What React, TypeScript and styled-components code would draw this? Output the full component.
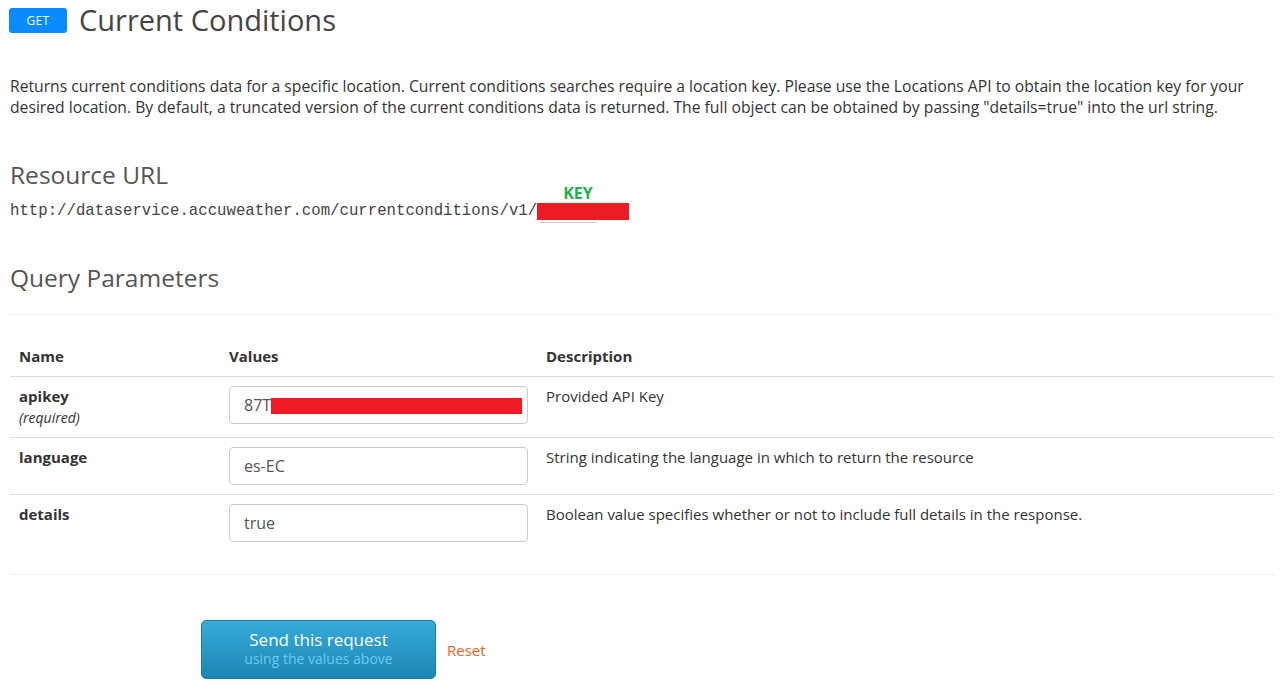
import React from "react";
import styled, { createGlobalStyle } from "styled-components";

const Global = createGlobalStyle`
  html, body { margin: 0; padding: 0; background: #fff; }
  body { font-family: "Open Sans", "Noto Sans", Arial, sans-serif; color: #333; }
  * { box-sizing: border-box; }
`;

const Page = styled.div`
  padding: 0 8px 0 10px;
  width: 1282px;
`;

const TitleRow = styled.div`
  display: flex;
  align-items: center;
  gap: 12px;
  height: 40px;
  margin-left: -1px;
`;

const MethodBadge = styled.span`
  display: inline-flex;
  align-items: center;
  justify-content: center;
  width: 58px;
  height: 25px;
  margin-top: 1px;
  border-radius: 3px;
  background: #0a8bff;
  color: #fff;
  font-size: 12px;
  letter-spacing: 0.3px;
`;

const Title = styled.h1`
  margin: 0;
  font-size: 29px;
  font-weight: 400;
  color: #444;
  line-height: 40px;
`;

const Description = styled.p`
  margin: 36px 0 0;
  font-size: 15.7px;
  line-height: 21px;
  color: #333;
`;

const SectionHeading = styled.h2<{ $top: number }>`
  margin: ${(p) => p.$top}px 0 0;
  font-size: 24.5px;
  font-weight: 400;
  color: #555;
  line-height: 30px;
`;

const UrlLine = styled.div`
  margin-top: 11px;
  font-family: "Liberation Mono", "Courier New", monospace;
  font-size: 15.7px;
  line-height: 20px;
  color: #444;
  display: flex;
  align-items: center;
`;

const Redacted = styled.span<{ $w: number; $h: number }>`
  position: relative;
  display: inline-block;
  width: ${(p) => p.$w}px;
  height: ${(p) => p.$h}px;
  background: #ed1c24;
`;

const KeyLabel = styled.span`
  position: absolute;
  left: 26px;
  top: -19px;
  font-family: "Open Sans", Arial, sans-serif;
  font-weight: 700;
  font-size: 16px;
  line-height: 18px;
  color: #22b14c;
`;

const Underline = styled.span`
  position: absolute;
  left: 4px;
  bottom: -3px;
  width: 55px;
  height: 1px;
  background: #c8c8c8;
`;

const Rule = styled.hr<{ $top: number }>`
  margin: ${(p) => p.$top}px 0 0;
  border: 0;
  border-top: 1px solid #eee;
  height: 0;
`;

const Table = styled.table`
  width: 100%;
  margin-top: 22px;
  border-collapse: collapse;
  font-size: 15px;
  line-height: 21px;
  color: #333;
`;

const Th = styled.th<{ $w?: number }>`
  text-align: left;
  font-weight: 700;
  padding: 9px 9px 9px;
  border-bottom: 1px solid #ddd;
  width: ${(p) => (p.$w ? `${p.$w}px` : "auto")};
  color: #333;
`;

const Td = styled.td<{ $last?: boolean }>`
  vertical-align: top;
  padding: 9px 9px 9px;
  border-bottom: ${(p) => (p.$last ? "none" : "1px solid #ddd")};
`;

const ParamName = styled.div`
  font-weight: 700;
`;

const Required = styled.div`
  font-style: italic;
  font-size: 14px;
`;

const DescCell = styled.div`
  color: #333;
`;

const InputBox = styled.div`
  position: relative;
  display: flex;
  align-items: center;
  width: 299px;
  height: 38px;
  padding: 0 14px;
  border: 1px solid #ccc;
  border-radius: 4px;
  font-size: 16px;
  color: #555;
  background: #fff;
`;

const InputRedact = styled.span`
  position: absolute;
  left: 41px;
  top: 11px;
  width: 251px;
  height: 16px;
  background: #ed1c24;
`;

const Actions = styled.div`
  display: flex;
  align-items: center;
  gap: 11px;
  margin-top: 45px;
  padding-left: 191px;
`;

const SendButton = styled.button`
  width: 235px;
  height: 59px;
  border: 1px solid #1b7fab;
  border-radius: 5px;
  background: linear-gradient(#38abd8, #1a86b4);
  display: flex;
  flex-direction: column;
  align-items: center;
  justify-content: center;
  font-family: "Open Sans", Arial, sans-serif;
  cursor: pointer;
  padding: 0 0 2px;
`;

const SendMain = styled.span`
  color: #fff;
  font-size: 17px;
  line-height: 20px;
`;

const SendSub = styled.span`
  color: #6ccaf1;
  font-size: 14px;
  line-height: 17px;
`;

const ResetLink = styled.a`
  color: #f0622d;
  font-size: 15px;
  text-decoration: none;
`;

const params = [
  { name: "apikey", required: true, value: "87T", redact: true, desc: "Provided API Key" },
  { name: "language", required: false, value: "es-EC", redact: false, desc: "String indicating the language in which to return the resource" },
  { name: "details", required: false, value: "true", redact: false, desc: "Boolean value specifies whether or not to include full details in the response." },
];

export default function App() {
  return (
    <Page>
      <Global />
      <TitleRow>
        <MethodBadge>GET</MethodBadge>
        <Title>Current Conditions</Title>
      </TitleRow>
      <Description>
        Returns current conditions data for a specific location. Current conditions searches require a location key. Please use the Locations API to obtain the location key for your desired location. By default, a truncated version of the current conditions data is returned. The full object can be obtained by passing "details=true" into the url string.
      </Description>
      <SectionHeading $top={42}>Resource URL</SectionHeading>
      <UrlLine>
        http://dataservice.accuweather.com/currentconditions/v1/
        <Redacted $w={92} $h={17}>
          <KeyLabel>KEY</KeyLabel>
          <Underline />
        </Redacted>
      </UrlLine>
      <SectionHeading $top={42}>Query Parameters</SectionHeading>
      <Rule $top={21} />
      <Table>
        <thead>
          <tr>
            <Th $w={210}>Name</Th>
            <Th $w={317}>Values</Th>
            <Th>Description</Th>
          </tr>
        </thead>
        <tbody>
          {params.map((p, i) => (
            <tr key={p.name}>
              <Td $last={i === params.length - 1}>
                <ParamName>{p.name}</ParamName>
                {p.required && <Required>(required)</Required>}
              </Td>
              <Td $last={i === params.length - 1}>
                <InputBox>
                  {p.value}
                  {p.redact && <InputRedact />}
                </InputBox>
              </Td>
              <Td $last={i === params.length - 1}>
                <DescCell>{p.desc}</DescCell>
              </Td>
            </tr>
          ))}
        </tbody>
      </Table>
      <Rule $top={23} />
      <Actions>
        <SendButton>
          <SendMain>Send this request</SendMain>
          <SendSub>using the values above</SendSub>
        </SendButton>
        <ResetLink href="#">Reset</ResetLink>
      </Actions>
    </Page>
  );
}
